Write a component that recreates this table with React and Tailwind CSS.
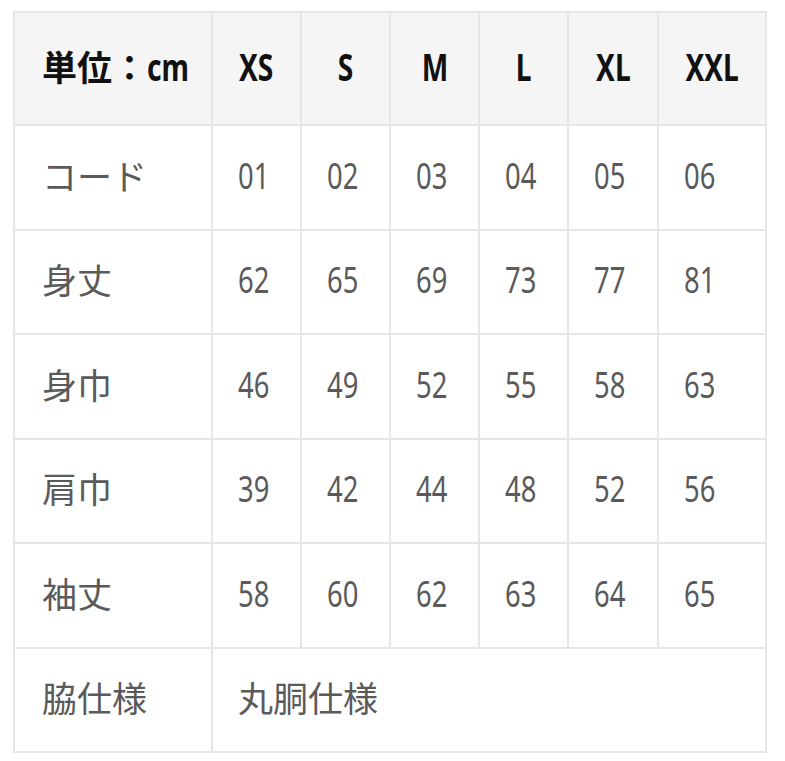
const sizes = ['XS', 'S', 'M', 'L', 'XL', 'XXL'];

const rows = [
  { label: 'コード', values: ['01', '02', '03', '04', '05', '06'] },
  { label: '身丈', values: ['62', '65', '69', '73', '77', '81'] },
  { label: '身巾', values: ['46', '49', '52', '55', '58', '63'] },
  { label: '肩巾', values: ['39', '42', '44', '48', '52', '56'] },
  { label: '袖丈', values: ['58', '60', '62', '63', '64', '65'] },
];

const jp = "font-['Noto_Sans_CJK_JP',sans-serif]";
const cell = 'border-2 border-[#e6e6e6] pb-[6px] leading-none';

function Narrow({ children, bold }) {
  return (
    <span
      className={`inline-block scale-x-[0.74] font-['Noto_Sans',sans-serif] ${
        bold ? 'origin-center font-bold text-[38px]' : 'origin-left text-[37px]'
      }`}
    >
      {children}
    </span>
  );
}

export default function App() {
  return (
    <div className="bg-white w-[785px] h-[761px] pt-[11px] pl-[13px]">
      <table className="table-fixed w-[752px] border-collapse border-2 border-[#e6e6e6]">
        <colgroup>
          <col className="w-[198px]" />
          <col className="w-[89px]" />
          <col className="w-[89px]" />
          <col className="w-[89px]" />
          <col className="w-[89px]" />
          <col className="w-[90px]" />
          <col className="w-[108px]" />
        </colgroup>
        <thead>
          <tr className="h-[113px] bg-[#f5f5f5] text-[#111]">
            <th className={`${cell} pl-[27px] text-left font-bold text-[35px] whitespace-nowrap ${jp}`}>
              単位：<span className="inline-block origin-left scale-x-[0.74] font-['Noto_Sans',sans-serif] font-bold text-[38px]">cm</span>
            </th>
            {sizes.map((s) => (
              <th key={s} className={`${cell} text-center`}>
                <Narrow bold>{s}</Narrow>
              </th>
            ))}
          </tr>
        </thead>
        <tbody className="text-[#5a5a5a]">
          {rows.map((r) => (
            <tr key={r.label} className="h-[104.5px]">
              <td className={`${cell} pl-[27px] text-[35px] ${jp}`}>{r.label}</td>
              {r.values.map((v, i) => (
                <td key={i} className={`${cell} pl-[25px]`}>
                  <Narrow>{v}</Narrow>
                </td>
              ))}
            </tr>
          ))}
          <tr className="h-[104.5px]">
            <td className={`${cell} pl-[27px] text-[35px] ${jp}`}>脇仕様</td>
            <td colSpan={6} className={`${cell} pl-[25px] text-[35px] ${jp}`}>
              丸胴仕様
            </td>
          </tr>
        </tbody>
      </table>
    </div>
  );
}
